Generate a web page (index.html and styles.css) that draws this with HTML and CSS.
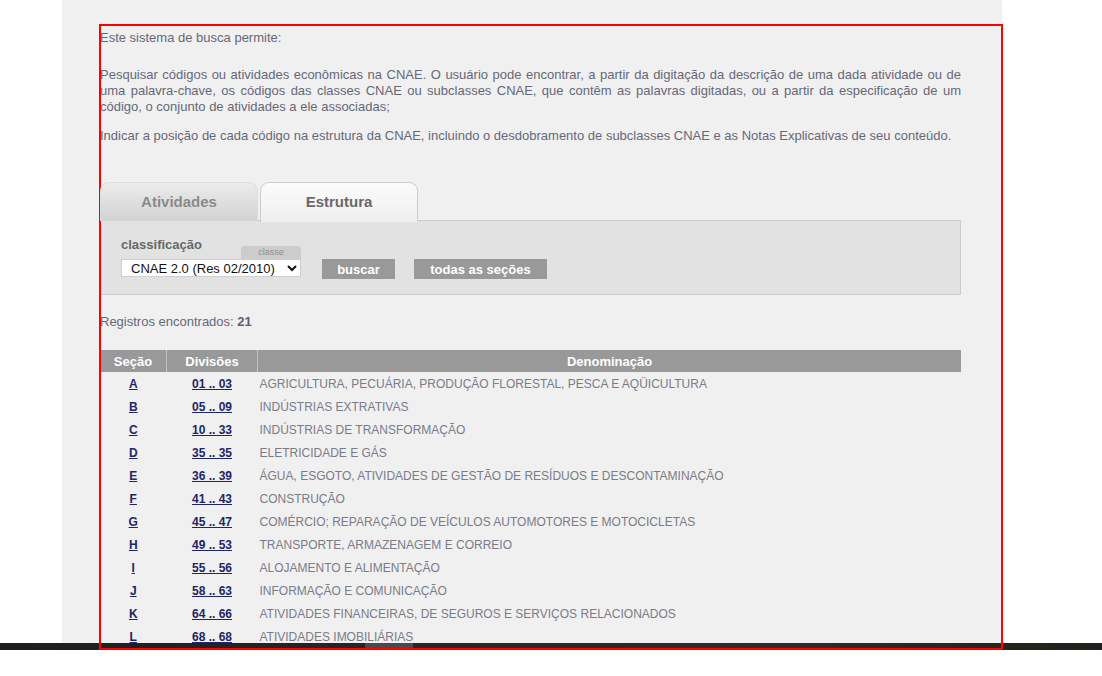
FILE: index.html
```html
<!DOCTYPE html>
<html lang="pt-BR">
<head>
<meta charset="utf-8">
<title>CNAE - Busca</title>
<link rel="stylesheet" href="styles.css">
</head>
<body>
<div class="viewport">
  <div class="page">
    <div class="content">
      <p class="intro-title">Este sistema de busca permite:</p>
      <p class="intro">Pesquisar códigos ou atividades econômicas na CNAE. O usuário pode encontrar, a partir da digitação da descrição de uma dada atividade ou de uma palavra-chave, os códigos das classes CNAE ou subclasses CNAE, que contêm as palavras digitadas, ou a partir da especificação de um código, o conjunto de atividades a ele associadas;</p>
      <p class="intro intro-2">Indicar a posição de cada código na estrutura da CNAE, incluindo o desdobramento de subclasses CNAE e as Notas Explicativas de seu conteúdo.</p>

      <div class="tabs">
        <div class="tab">Atividades</div>
        <div class="tab tab-active">Estrutura</div>
      </div>
      <div class="panel">
        <div class="field">
          <div class="field-head">
            <span class="label">classificação</span>
            <span class="mini-tab">classe</span>
          </div>
          <select class="select">
            <option>CNAE 2.0 (Res 02/2010)</option>
          </select>
        </div>
        <button class="btn btn-buscar">buscar</button>
        <button class="btn btn-todas">todas as seções</button>
      </div>

      <p class="count">Registros encontrados: <b>21</b></p>

      <table class="grid">
        <thead>
          <tr><th class="c1">Seção</th><th class="c2">Divisões</th><th class="c3">Denominação</th></tr>
        </thead>
        <tbody>
          <tr><td class="c1"><a href="#">A</a></td><td class="c2"><a href="#">01 .. 03</a></td><td class="c3">AGRICULTURA, PECUÁRIA, PRODUÇÃO FLORESTAL, PESCA E AQÜICULTURA</td></tr>
          <tr><td class="c1"><a href="#">B</a></td><td class="c2"><a href="#">05 .. 09</a></td><td class="c3">INDÚSTRIAS EXTRATIVAS</td></tr>
          <tr><td class="c1"><a href="#">C</a></td><td class="c2"><a href="#">10 .. 33</a></td><td class="c3">INDÚSTRIAS DE TRANSFORMAÇÃO</td></tr>
          <tr><td class="c1"><a href="#">D</a></td><td class="c2"><a href="#">35 .. 35</a></td><td class="c3">ELETRICIDADE E GÁS</td></tr>
          <tr><td class="c1"><a href="#">E</a></td><td class="c2"><a href="#">36 .. 39</a></td><td class="c3">ÁGUA, ESGOTO, ATIVIDADES DE GESTÃO DE RESÍDUOS E DESCONTAMINAÇÃO</td></tr>
          <tr><td class="c1"><a href="#">F</a></td><td class="c2"><a href="#">41 .. 43</a></td><td class="c3">CONSTRUÇÃO</td></tr>
          <tr><td class="c1"><a href="#">G</a></td><td class="c2"><a href="#">45 .. 47</a></td><td class="c3">COMÉRCIO; REPARAÇÃO DE VEÍCULOS AUTOMOTORES E MOTOCICLETAS</td></tr>
          <tr><td class="c1"><a href="#">H</a></td><td class="c2"><a href="#">49 .. 53</a></td><td class="c3">TRANSPORTE, ARMAZENAGEM E CORREIO</td></tr>
          <tr><td class="c1"><a href="#">I</a></td><td class="c2"><a href="#">55 .. 56</a></td><td class="c3">ALOJAMENTO E ALIMENTAÇÃO</td></tr>
          <tr><td class="c1"><a href="#">J</a></td><td class="c2"><a href="#">58 .. 63</a></td><td class="c3">INFORMAÇÃO E COMUNICAÇÃO</td></tr>
          <tr><td class="c1"><a href="#">K</a></td><td class="c2"><a href="#">64 .. 66</a></td><td class="c3">ATIVIDADES FINANCEIRAS, DE SEGUROS E SERVIÇOS RELACIONADOS</td></tr>
          <tr><td class="c1"><a href="#">L</a></td><td class="c2"><a href="#">68 .. 68</a></td><td class="c3">ATIVIDADES IMOBILIÁRIAS</td></tr>
          <tr><td class="c1"><a href="#">M</a></td><td class="c2"><a href="#">69 .. 75</a></td><td class="c3">ATIVIDADES PROFISSIONAIS, CIENTÍFICAS E TÉCNICAS</td></tr>
          <tr><td class="c1"><a href="#">N</a></td><td class="c2"><a href="#">77 .. 82</a></td><td class="c3">ATIVIDADES ADMINISTRATIVAS E SERVIÇOS COMPLEMENTARES</td></tr>
        </tbody>
      </table>
    </div>
  </div>
  <div class="footer-bar"><span class="footer-thumb"></span></div>
  <div class="highlight"></div>
</div>
</body>
</html>
```

FILE: styles.css
```css
html, body {
  margin: 0;
  padding: 0;
  background: #ffffff;
}

body {
  font-family: "Liberation Sans", Arial, sans-serif;
  font-size: 13px;
  color: #666879;
}

.viewport {
  position: relative;
  width: 1102px;
  height: 676px;
  overflow: hidden;
}

.page {
  margin-left: 62px;
  width: 940px;
  height: 643px;
  background: #f0f0f0;
  overflow: hidden;
}

.content {
  padding: 30px 41px 0 38px;
}

.intro-title {
  margin: 0;
  line-height: 16px;
}

.intro {
  margin: 21px 0 0 0;
  line-height: 16px;
  text-align: justify;
}

.intro-2 {
  margin-top: 13px;
}

/* tabs */
.tabs {
  display: flex;
  gap: 2px;
  margin-top: 38px;
  height: 39px;
  position: relative;
  z-index: 1;
}

.tab {
  width: 158px;
  box-sizing: border-box;
  border: 1px solid #dcdcdc;
  border-bottom: none;
  border-radius: 9px 9px 0 0;
  background: linear-gradient(#ececec, #d2d2d2);
  color: #8a8a8a;
  font-weight: bold;
  font-size: 15px;
  text-align: center;
  line-height: 38px;
}

.tab-active {
  height: 40px;
  background: linear-gradient(#fbfbfb, #efefef);
  border-color: #cccccc;
  color: #686868;
}

.panel {
  margin-top: -1px;
  height: 75px;
  box-sizing: border-box;
  border: 1px solid #cccccc;
  background: #e2e2e2;
  display: flex;
  align-items: flex-end;
  padding: 0 0 17px 20px;
}

.field {
  display: flex;
  flex-direction: column;
  width: 180px;
}

.field-head {
  display: flex;
  justify-content: space-between;
  align-items: flex-end;
}

.label {
  font-weight: bold;
  color: #686868;
  font-size: 13px;
  line-height: 16px;
  margin-bottom: 6px;
}

.mini-tab {
  width: 60px;
  height: 13px;
  background: #cccccc;
  border-radius: 3px 3px 0 0;
  color: #8e8e8e;
  font-size: 9px;
  line-height: 13px;
  text-align: center;
}

.select {
  width: 180px;
  height: 18px;
  margin: 0;
  padding: 0 0 0 5px;
  border: 1px solid #cfcfcf;
  border-radius: 0;
  background: #ffffff;
  font-family: "Liberation Sans", Arial, sans-serif;
  font-size: 13px;
  color: #111111;
}

.btn {
  height: 20px;
  margin: 0 0 -2px 0;
  padding: 0;
  border: none;
  background: #999999;
  color: #ffffff;
  font-family: "Liberation Sans", Arial, sans-serif;
  font-weight: bold;
  font-size: 13px;
}

.btn-buscar {
  width: 73px;
  margin-left: 21px;
}

.btn-todas {
  width: 133px;
  margin-left: 19px;
}

.count {
  margin: 19px 0 0 0;
  line-height: 16px;
}

.count b {
  color: #5e6070;
}

/* table */
.grid {
  margin-top: 20px;
  width: 861px;
  border-collapse: collapse;
}

.grid th {
  height: 22px;
  padding: 0;
  background: #999999;
  color: #ffffff;
  font-weight: bold;
  font-size: 13px;
  border-left: 1px solid #c4c4c4;
}

.grid th:first-child {
  border-left: none;
}

.grid td {
  height: 23px;
  padding: 0;
  font-size: 12px;
}

.c1 {
  width: 66px;
  text-align: center;
}

.c2 {
  width: 90px;
  text-align: center;
}

.grid td.c3 {
  text-align: left;
  padding-left: 2px;
  color: #7a7c88;
}

.grid a {
  color: #1f2566;
  font-weight: bold;
  text-decoration: underline;
}

.footer-bar {
  height: 7px;
  background: linear-gradient(90deg, #1e1e1e, #2b2622 40%, #332c25 70%, #221f1c);
  display: flex;
}

.footer-thumb {
  margin-left: 365px;
  width: 48px;
  background: #4a4a4a;
}

.highlight {
  position: absolute;
  left: 99px;
  top: 24px;
  width: 904px;
  height: 626px;
  box-sizing: border-box;
  border: 2px solid #ff0000;
  pointer-events: none;
}
```
